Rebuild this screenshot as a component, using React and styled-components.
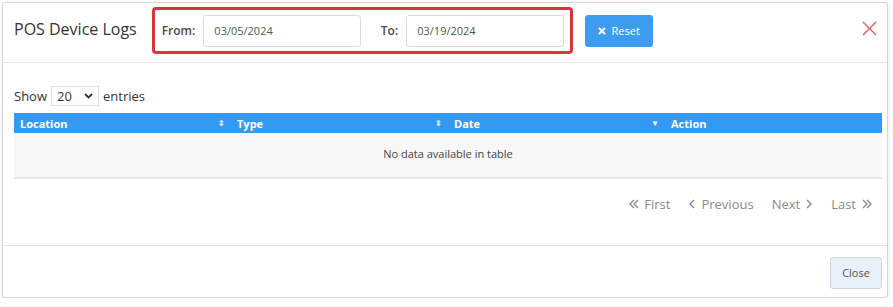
import React from 'react'
import styled, {createGlobalStyle} from 'styled-components'

const Global = createGlobalStyle`
  body {
    margin: 0;
    background: #fff;
    font-family: 'Open Sans', 'Liberation Sans', sans-serif;
    color: #333;
  }
`

const Modal = styled.div`
  margin: 2px 0 0 2px;
  width: 884px;
  height: 294px;
  border: 1px solid #d6d6d6;
  border-radius: 3px;
  box-shadow: 0 1px 3px rgba(0, 0, 0, 0.12);
  display: flex;
  flex-direction: column;
  background: #fff;
`

const Header = styled.div`
  height: 59px;
  display: flex;
  align-items: center;
  padding: 0 10px 0 11px;
  border-bottom: 1px solid #e5e5e5;
`

const Title = styled.h4`
  margin: 0 15px 0 0;
  font-size: 16px;
  font-weight: 400;
  color: #333;
  position: relative;
  top: -4px;
`

const Filter = styled.div`
  box-sizing: border-box;
  display: flex;
  align-items: center;
  width: 421px;
  height: 47px;
  border: 3px solid #d8363b;
  border-radius: 4px;
  padding: 0 6px 0 7px;
  position: relative;
  top: -2px;
`

const Label = styled.label`
  font-size: 12px;
  font-weight: 600;
  color: #4a4a4a;
  margin-right: 8px;
  margin-left: ${({lead}) => lead || '0'};
`

const DateInput = styled.div`
  width: 158px;
  height: 32px;
  border: 1px solid #dcdcdc;
  border-radius: 3px;
  display: flex;
  align-items: center;
  padding-left: 10px;
  box-sizing: border-box;
  font-size: 11px;
  color: #555;
`

const ResetButton = styled.button`
  margin-left: 12px;
  height: 32px;
  width: 68px;
  border: none;
  border-radius: 3px;
  background: #3d9cf0;
  color: #fff;
  font-family: inherit;
  font-size: 11px;
  display: flex;
  align-items: center;
  justify-content: center;
  gap: 6px;
  position: relative;
  top: -2px;
`

const CloseX = styled.span`
  margin-left: auto;
  position: relative;
  top: -4px;
  display: flex;
`

const Body = styled.div`
  flex: 1;
  padding: 23px 4px 0 11px;
  border-bottom: 1px solid #e5e5e5;
`

const Length = styled.div`
  display: flex;
  align-items: center;
  font-size: 13px;
  color: #333;
  height: 20px;
`

const Select = styled.div`
  margin: 0 4px;
  width: 48px;
  height: 20px;
  box-sizing: border-box;
  border: 1px solid #e0e0e0;
  display: flex;
  align-items: center;
  justify-content: space-between;
  padding: 0 5px;
  font-size: 13px;
`

const Table = styled.div`
  margin-top: 7px;
  width: 868px;
`

const HeadRow = styled.div`
  display: grid;
  grid-template-columns: repeat(4, 1fr);
  height: 20px;
  background: #3399f3;
`

const HeadCell = styled.div`
  display: flex;
  align-items: center;
  justify-content: space-between;
  padding: 0 6px;
  font-size: 11px;
  font-weight: 700;
  color: #fff;
`

const Sort = styled.span`
  font-size: 8px;
  color: ${({active}) => (active ? '#fff' : 'rgba(255,255,255,0.75)')};
  line-height: 1;
`

const Empty = styled.div`
  height: 41px;
  background: #f7f7f7;
  border-bottom: 2px solid #e6e6e6;
  display: flex;
  align-items: center;
  justify-content: center;
  padding-bottom: 3px;
  font-size: 11px;
  color: #444;
`

const Pager = styled.div`
  display: flex;
  justify-content: flex-end;
  gap: 18px;
  margin-top: 16px;
  padding-right: 11px;
  font-size: 13px;
  color: #8a8a8a;
`

const PageLink = styled.span`
  display: flex;
  align-items: center;
  gap: 5px;
`

const Footer = styled.div`
  height: 51px;
  display: flex;
  align-items: center;
  justify-content: flex-end;
  padding-right: 5px;
`

const CloseButton = styled.button`
  width: 52px;
  height: 32px;
  border: 1px solid #cfd6dd;
  border-radius: 3px;
  background: #e8f1f9;
  color: #555;
  font-family: inherit;
  font-size: 11px;
  position: relative;
  top: 1px;
`

const Chev = ({dir = 'left', double}) => {
  const d = dir === 'left' ? 'M6 1 L2 5 L6 9' : 'M2 1 L6 5 L2 9'
  return (
    <svg width={double ? 11 : 8} height="10" viewBox={double ? '0 0 11 10' : '0 0 8 10'}>
      <path d={d} stroke="#8a8a8a" strokeWidth="1.4" fill="none" />
      {double && <path d={d} transform="translate(4 0)" stroke="#8a8a8a" strokeWidth="1.4" fill="none" />}
    </svg>
  )
}

const columns = [
  {name: 'Location', sort: 'both'},
  {name: 'Type', sort: 'both'},
  {name: 'Date', sort: 'desc'},
  {name: 'Action'},
]

const App = () => (
  <>
    <Global />
    <Modal>
      <Header>
        <Title>POS Device Logs</Title>
        <Filter>
          <Label>From:</Label>
          <DateInput>03/05/2024</DateInput>
          <Label lead="20px">To:</Label>
          <DateInput>03/19/2024</DateInput>
        </Filter>
        <ResetButton>
          <svg width="8" height="8" viewBox="0 0 8 8">
            <path d="M1 1 L7 7 M7 1 L1 7" stroke="#fff" strokeWidth="2" />
          </svg>
          Reset
        </ResetButton>
        <CloseX>
          <svg width="15" height="15" viewBox="0 0 15 15">
            <path d="M1 1 L14 14 M14 1 L1 14" stroke="#e06a6a" strokeWidth="1.6" />
          </svg>
        </CloseX>
      </Header>
      <Body>
        <Length>
          Show
          <Select>
            20
            <svg width="9" height="6" viewBox="0 0 9 6">
              <path d="M1 1 L4.5 4.5 L8 1" stroke="#333" strokeWidth="1.8" fill="none" />
            </svg>
          </Select>
          entries
        </Length>
        <Table>
          <HeadRow>
            {columns.map(c => (
              <HeadCell key={c.name}>
                {c.name}
                {c.sort === 'both' && <Sort>⬍</Sort>}
                {c.sort === 'desc' && <Sort active>▼</Sort>}
              </HeadCell>
            ))}
          </HeadRow>
          <Empty>No data available in table</Empty>
        </Table>
        <Pager>
          <PageLink><Chev double />First</PageLink>
          <PageLink><Chev />Previous</PageLink>
          <PageLink>Next<Chev dir="right" /></PageLink>
          <PageLink>Last<Chev dir="right" double /></PageLink>
        </Pager>
      </Body>
      <Footer>
        <CloseButton>Close</CloseButton>
      </Footer>
    </Modal>
  </>
)

export default App
